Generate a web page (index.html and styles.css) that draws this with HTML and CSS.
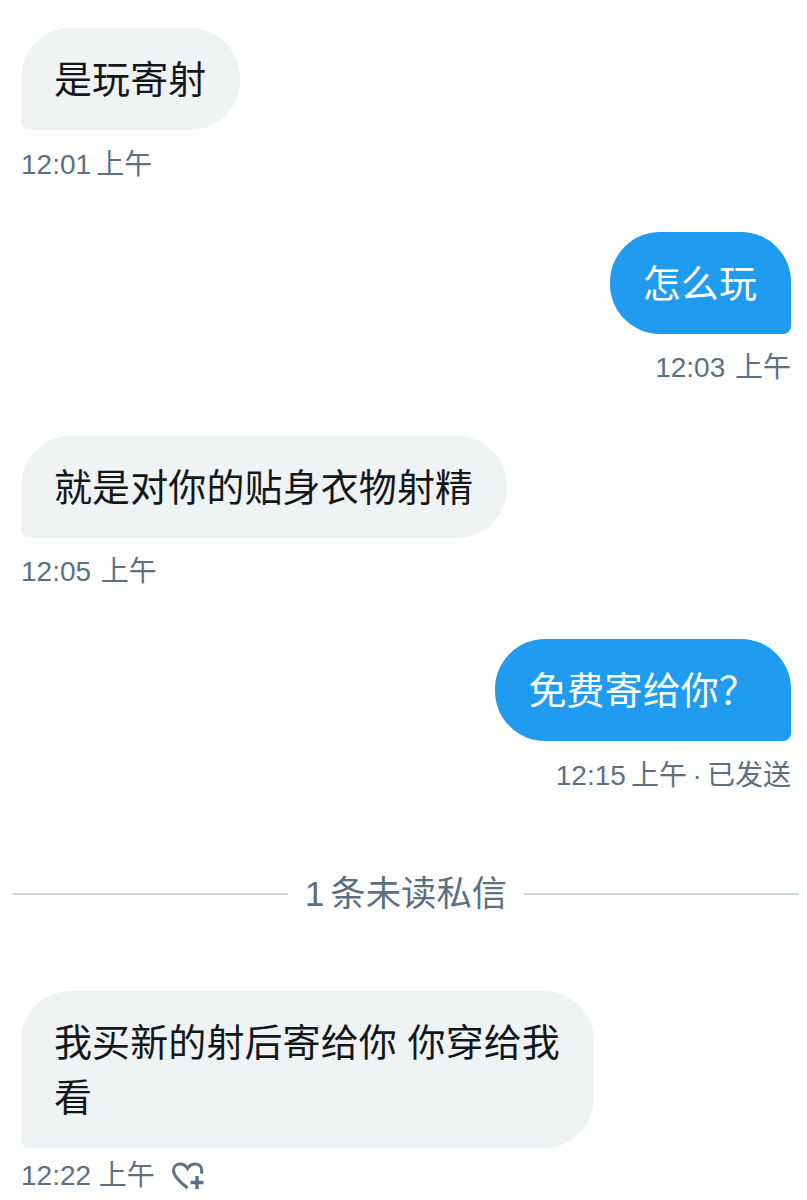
FILE: index.html
```html
<!DOCTYPE html>
<html lang="zh-CN">

<head>
    <meta charset="UTF-8">
    <meta name="viewport" content="width=device-width, initial-scale=1.0">
    <title>私信</title>
    <link rel="stylesheet" href="styles.css">
</head>

<body>
    <div class="conversa">
        <div class="msg recebida">
            <div class="balao">是玩寄射</div>
            <div class="hora hora-curta">12:01 上午</div>
        </div>

        <div class="msg enviada">
            <div class="balao">怎么玩</div>
            <div class="hora hora-larga">12:03 上午</div>
        </div>

        <div class="msg recebida">
            <div class="balao">就是对你的贴身衣物射精</div>
            <div class="hora hora-larga">12:05 上午</div>
        </div>

        <div class="msg enviada">
            <div class="balao">免费寄给你？</div>
            <div class="hora hora-curta">12:15 上午 · 已发送</div>
        </div>

        <div class="divisor">
            <span class="linha"></span>
            <span class="divisor-texto">1 条未读私信</span>
            <span class="linha"></span>
        </div>

        <div class="msg recebida">
            <div class="balao balao-largo">我买新的射后寄给你 你穿给我看</div>
            <div class="hora hora-like">
                <span>12:22 上午</span>
                <svg class="icone-like" viewBox="0 0 32 28" width="32" height="28" aria-hidden="true">
                    <path d="M15.5 26 C9 21 1.5 14.5 1.5 8.6 C1.5 4.6 4.5 2 8 2 C11.2 2 14 3.8 15.6 6.6 C17.2 3.8 20 2 23.2 2 C27 2 29.8 4.8 29.8 8.6 C29.8 9.6 29.7 10.6 29.4 11.6" />
                    <path class="icone-mais" d="M25 14 V27 M18.5 20.5 H31.5" />
                </svg>
            </div>
        </div>
    </div>
</body>

</html>
```

FILE: styles.css
```css
body {
    margin: 0;
    background-color: #fff;
    font-family: "Liberation Sans", "Noto Sans CJK SC", sans-serif;
}

.conversa {
    display: flex;
    flex-direction: column;
    padding: 28px 16px 0 21px;
}

.msg {
    display: flex;
    flex-direction: column;
    height: 203.8px;
}

.recebida {
    align-items: flex-start;
}

.enviada {
    align-items: flex-end;
}

.balao {
    box-sizing: border-box;
    padding: 25px 34px 22px 33px;
    font-size: 38px;
    line-height: 55px;
    letter-spacing: 0.1px;
    border-radius: 50px;
}

.recebida .balao {
    background-color: #eff3f4;
    color: #14171a;
    border-bottom-left-radius: 8px;
}

.enviada .balao {
    background-color: #1f9bef;
    color: #fff;
    border-bottom-right-radius: 8px;
}

.balao-largo {
    width: 573px;
    padding-right: 28px;
}

.hora {
    margin-top: 14.5px;
    font-size: 28px;
    line-height: 40px;
    color: #5b7083;
}

.hora-curta {
    word-spacing: -2.5px;
}

.hora-larga {
    word-spacing: 2px;
}

.hora-like {
    display: flex;
    align-items: center;
    gap: 17px;
    margin-top: 8px;
}

.divisor {
    display: flex;
    align-items: center;
    gap: 17px;
    height: 46px;
    margin: 27.8px -8px 74px -8px;
}

.linha {
    flex: 1;
    height: 2px;
    background-color: #ccd6dd;
}

.divisor-texto {
    font-size: 35.4px;
    line-height: 46px;
    word-spacing: -4px;
    color: #5b7083;
}

.icone-like {
    fill: none;
    stroke: #5b7083;
    stroke-width: 3;
}

.icone-mais {
    stroke-width: 3.4;
}
```
